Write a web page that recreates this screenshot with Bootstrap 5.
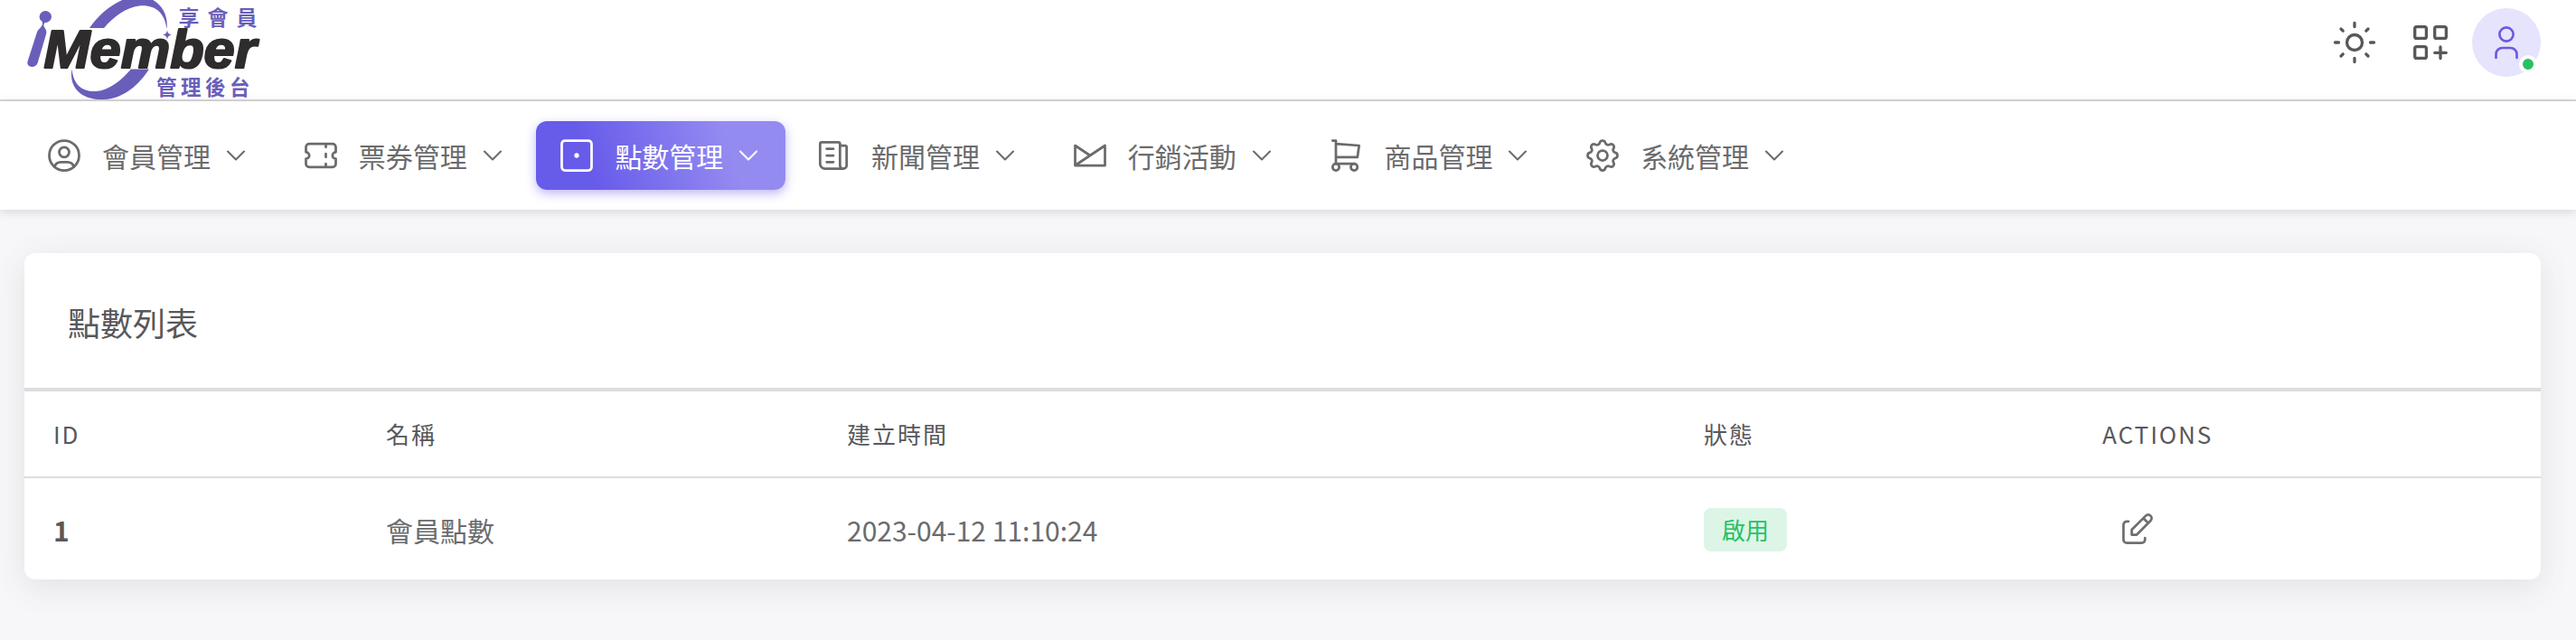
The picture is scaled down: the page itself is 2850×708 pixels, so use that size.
<!DOCTYPE html>
<html lang="zh-Hant">
<head>
    <meta charset="UTF-8">
    <meta name="viewport" content="width=device-width, initial-scale=1.0">
    <title>點數列表 - iMember 管理後台</title>
    <!-- Bootstrap CSS -->
    <link href="https://cdn.jsdelivr.net/npm/bootstrap@5.3.3/dist/css/bootstrap.min.css" rel="stylesheet">
    <style>
        body {
            background-color: #f7f7f9;
            color: #6b6b6d;
            font-family: "Noto Sans CJK TC", sans-serif;
            font-size: 30px;
            line-height: 44px;
            min-height: 708px;
            overflow: hidden;
        }
        svg {
            flex-shrink: 0;
            fill: none;
            stroke: currentColor;
            stroke-linecap: round;
            stroke-linejoin: round;
        }
        .top-bar {
            height: 112px;
            padding: 0 39px 0 30px;
            border-bottom: 2px solid #d8d8da;
        }
        .logo {
            width: 260px;
            height: 110px;
            overflow: visible;
        }
        .top-tools {
            height: 94px;
            color: #58585b;
        }
        .avatar {
            width: 76px;
            height: 76px;
            margin-left: 16px;
            background: #e6e3fc;
            color: #6a5be0;
        }
        .status-dot {
            right: 4px;
            bottom: 4px;
            width: 20px;
            height: 20px;
            border: 4px solid #fff;
            background: #28c160;
        }
        .menu-bar {
            height: 120px;
            padding: 0 26px;
            box-shadow: 0 2px 10px rgba(75, 70, 92, .2);
        }
        .menu-list {
            gap: 7.7px;
        }
        .menu-item {
            width: 276px;
            height: 76px;
            padding: 0 23px;
            border-radius: 12px;
            color: #6b6b6d;
        }
        .menu-item.active {
            color: #fff;
            background: linear-gradient(72.47deg, #675bea 22.16%, #948bf1 76.47%);
            box-shadow: 0 4px 12px rgba(115, 103, 240, .48);
        }
        .menu-icon {
            width: 44px;
            height: 44px;
            margin-right: 20px;
            stroke-width: 1.5;
        }
        .menu-arrow {
            width: 36px;
            height: 36px;
            margin-left: 10px;
            stroke-width: 1.4;
        }
        .page-body {
            padding: 48px 39px 0 27px;
        }
        .list-card {
            border: 0;
            border-radius: 12px;
            box-shadow: 0 8px 36px rgba(75, 70, 92, .12);
            color: inherit;
        }
        .list-title {
            height: 153px;
            padding: 4px 48px 0;
            border-bottom: 4px solid #dddddf;
            font-size: 36px;
            color: #58585b;
        }
        .list-table {
            table-layout: fixed;
            color: inherit;
            border-collapse: separate;
            border-spacing: 0;
            --bs-table-bg: transparent;
        }
        .list-table > thead > tr > th {
            height: 96px;
            padding: 0 32px;
            border: 0;
            border-bottom: 2px solid #dddddf;
            vertical-align: middle;
            font-size: 26px;
            font-weight: 400;
            letter-spacing: 2px;
            color: #58585b;
        }
        .list-table > tbody > tr > td {
            height: 112px;
            padding: 2px 32px 0;
            border: 0;
            color: inherit;
        }
        .w-id { width: 368px; }
        .w-name { width: 510px; }
        .w-time { width: 948px; }
        .w-state { width: 441px; }
        .list-table > tbody > tr > td.row-id {
            font-weight: 700;
            color: #58585b;
        }
        .state-badge {
            width: 92px;
            height: 48px;
            border-radius: 8px;
            background: #ddf5e6;
            color: #28c068;
            font-size: 26px;
        }
        .edit-btn {
            margin-left: 16px;
            color: #6f6f71;
        }
    </style>
</head>
<body>
    <!-- Top bar -->
    <header class="top-bar bg-white d-flex justify-content-between align-items-start">
        <a href="#" class="d-block" aria-label="iMember">
            <svg class="logo" viewBox="30 0 260 110">
                <g fill="#695fbb" stroke="none">
                    <path d="M99 31C112 12 133-3 151-4C173-5 187 12 184.5 32C182 14 172 5 154 6.500C140 8 126 18 115 31Z"/>
                    <path d="M79.500 76C81 94 91 101.500 106 101C121 100 134 89 145 76.500H165C154 93 138 109 115 110C89 111 76 96 79.500 76Z"/>
                    <ellipse cx="50.300" cy="18.500" rx="6.700" ry="6.500"/>
                    <path d="M46.500 23.500C48 27 46 29 44 31.500C42 33 41 35 40.500 37L30.500 68C29 75 39 76 41.500 70L51 38C52.500 34 49.500 31 48.500 29C48 27 49 25 51 24Z"/>
                    <path d="M185 33.500Q185.800 38 190 38.500Q185.800 39 185 43.500Q184.200 39 180 38.500Q184.200 38 185 33.500Z"/>
                    <text x="197.500" y="28" font-family="Noto Sans CJK TC" font-weight="700" font-size="23" letter-spacing="9">享會員</text>
                    <text x="173" y="105" font-family="Noto Sans CJK TC" font-weight="700" font-size="22.500" letter-spacing="4.500">管理後台</text>
                </g>
                <text x="48.500" y="74.500" fill="#2e2c2d" stroke="#2e2c2d" stroke-width="2.200" font-family="Liberation Sans" font-weight="700" font-style="italic" font-size="59" textLength="235" lengthAdjust="spacingAndGlyphs">Member</text>
            </svg>
        </a>
        <div class="top-tools d-flex align-items-center">
            <svg width="60" height="60" viewBox="-30 -30 60 60" stroke-width="3.300">
                <circle r="8.500"/>
                <path d="M-21.500 0h4M17.500 0h4M0-21.500v4M0 17.500v4M-15-15l2.200 2.200M15-15l-2.200 2.200M-15 15l2.200-2.200M15 15l-2.200-2.200"/>
            </svg>
            <svg class="ms-4" width="60" height="60" viewBox="-30 -30 60 60" stroke-width="3.300">
                <rect x="-17.300" y="-17.300" width="12.700" height="12.700" rx="2"/>
                <rect x="4.700" y="-17.300" width="12.700" height="12.700" rx="2"/>
                <rect x="-17.300" y="4.700" width="12.700" height="12.700" rx="2"/>
                <path d="M11 5v12.600M4.700 11.300h12.600"/>
            </svg>
            <div class="avatar rounded-circle position-relative">
                <svg class="d-block" width="76" height="76" viewBox="-38 -38 76 76" stroke-width="2.700">
                    <circle cx="0" cy="-9" r="7.600"/>
                    <path d="M-11.500 17v-4a7 7 0 0 1 7-7h9a7 7 0 0 1 7 7v4"/>
                </svg>
                <span class="status-dot position-absolute rounded-circle"></span>
            </div>
        </div>
    </header>

    <!-- Main menu -->
    <nav class="menu-bar bg-white d-flex align-items-center position-relative">
        <div class="menu-list d-flex">
            <a href="#" class="menu-item d-flex align-items-center text-decoration-none">
                <svg class="menu-icon" viewBox="0 0 24 24"><circle cx="12" cy="12" r="9"/><circle cx="12" cy="10" r="3"/><path d="M6.168 18.849a4 4 0 0 1 3.832-2.849h4a4 4 0 0 1 3.834 2.855"/></svg>
                <span>會員管理</span>
                <svg class="menu-arrow" viewBox="0 0 24 24"><path d="M6 9l6 6l6-6"/></svg>
            </a>
            <a href="#" class="menu-item d-flex align-items-center text-decoration-none">
                <svg class="menu-icon" viewBox="0 0 24 24"><path d="M15 5v2M15 11v2M15 17v2M5 5h14a2 2 0 0 1 2 2v3a2 2 0 0 0 0 4v3a2 2 0 0 1-2 2h-14a2 2 0 0 1-2-2v-3a2 2 0 0 0 0-4v-3a2 2 0 0 1 2-2"/></svg>
                <span>票券管理</span>
                <svg class="menu-arrow" viewBox="0 0 24 24"><path d="M6 9l6 6l6-6"/></svg>
            </a>
            <a href="#" class="menu-item active d-flex align-items-center text-decoration-none">
                <svg class="menu-icon" viewBox="0 0 24 24"><rect x="3" y="3" width="18" height="18" rx="2"/><circle cx="12" cy="12" r=".7" fill="currentColor"/></svg>
                <span>點數管理</span>
                <svg class="menu-arrow" viewBox="0 0 24 24"><path d="M6 9l6 6l6-6"/></svg>
            </a>
            <a href="#" class="menu-item d-flex align-items-center text-decoration-none">
                <svg class="menu-icon" viewBox="0 0 24 24"><path d="M16 6h3a1 1 0 0 1 1 1v11a2 2 0 0 1-4 0v-13a1 1 0 0 0-1-1h-10a1 1 0 0 0-1 1v12a3 3 0 0 0 3 3h11M8 8h4M8 12h4M8 16h4"/></svg>
                <span>新聞管理</span>
                <svg class="menu-arrow" viewBox="0 0 24 24"><path d="M6 9l6 6l6-6"/></svg>
            </a>
            <a href="#" class="menu-item d-flex align-items-center text-decoration-none">
                <svg class="menu-icon" viewBox="0 0 24 24"><path d="M3 18v-12l9 6l9-6v12zM3 18l9-6"/></svg>
                <span>行銷活動</span>
                <svg class="menu-arrow" viewBox="0 0 24 24"><path d="M6 9l6 6l6-6"/></svg>
            </a>
            <a href="#" class="menu-item d-flex align-items-center text-decoration-none">
                <svg class="menu-icon" viewBox="0 0 24 24"><circle cx="6" cy="19" r="2"/><circle cx="17" cy="19" r="2"/><path d="M17 17h-11v-14h-2M6 5l14 1l-1 7h-13"/></svg>
                <span>商品管理</span>
                <svg class="menu-arrow" viewBox="0 0 24 24"><path d="M6 9l6 6l6-6"/></svg>
            </a>
            <a href="#" class="menu-item d-flex align-items-center text-decoration-none">
                <svg class="menu-icon" viewBox="0 0 24 24"><path d="M10.325 4.317c.426-1.756 2.924-1.756 3.350 0a1.724 1.724 0 0 0 2.573 1.066c1.543-.94 3.310.826 2.370 2.370a1.724 1.724 0 0 0 1.065 2.572c1.756.426 1.756 2.924 0 3.350a1.724 1.724 0 0 0-1.066 2.573c.94 1.543-.826 3.310-2.370 2.370a1.724 1.724 0 0 0-2.572 1.065c-.426 1.756-2.924 1.756-3.350 0a1.724 1.724 0 0 0-2.573-1.066c-1.543.94-3.310-.826-2.370-2.370a1.724 1.724 0 0 0-1.065-2.572c-1.756-.426-1.756-2.924 0-3.350a1.724 1.724 0 0 0 1.066-2.573c-.94-1.543.826-3.310 2.370-2.370c1 .608 2.296.07 2.572-1.065z"/><circle cx="12" cy="12" r="3"/></svg>
                <span>系統管理</span>
                <svg class="menu-arrow" viewBox="0 0 24 24"><path d="M6 9l6 6l6-6"/></svg>
            </a>
        </div>
    </nav>

    <!-- Points list -->
    <main class="page-body">
        <section class="card list-card">
            <h5 class="list-title d-flex align-items-center mb-0 fw-normal">點數列表</h5>
            <table class="table list-table align-middle mb-0">
                <colgroup>
                    <col class="w-id"><col class="w-name"><col class="w-time"><col class="w-state"><col>
                </colgroup>
                <thead>
                    <tr>
                        <th>ID</th>
                        <th>名稱</th>
                        <th>建立時間</th>
                        <th>狀態</th>
                        <th>ACTIONS</th>
                    </tr>
                </thead>
                <tbody>
                    <tr>
                        <td class="row-id">1</td>
                        <td>會員點數</td>
                        <td>2023-04-12 11:10:24</td>
                        <td><span class="state-badge d-flex align-items-center justify-content-center">啟用</span></td>
                        <td>
                            <a href="#" class="edit-btn d-flex" aria-label="編輯">
                                <svg width="44" height="44" viewBox="0 0 24 24" stroke-width="1.500"><path d="M7 7h-1a2 2 0 0 0-2 2v9a2 2 0 0 0 2 2h9a2 2 0 0 0 2-2v-1M20.385 6.585a2.100 2.100 0 0 0-2.970-2.970l-8.415 8.385v3h3l8.385-8.415zM16 5l3 3"/></svg>
                            </a>
                        </td>
                    </tr>
                </tbody>
            </table>
        </section>
    </main>

    <!-- Bootstrap JS -->
    <script src="https://cdn.jsdelivr.net/npm/bootstrap@5.3.3/dist/js/bootstrap.bundle.min.js"></script>
</body>
</html>
